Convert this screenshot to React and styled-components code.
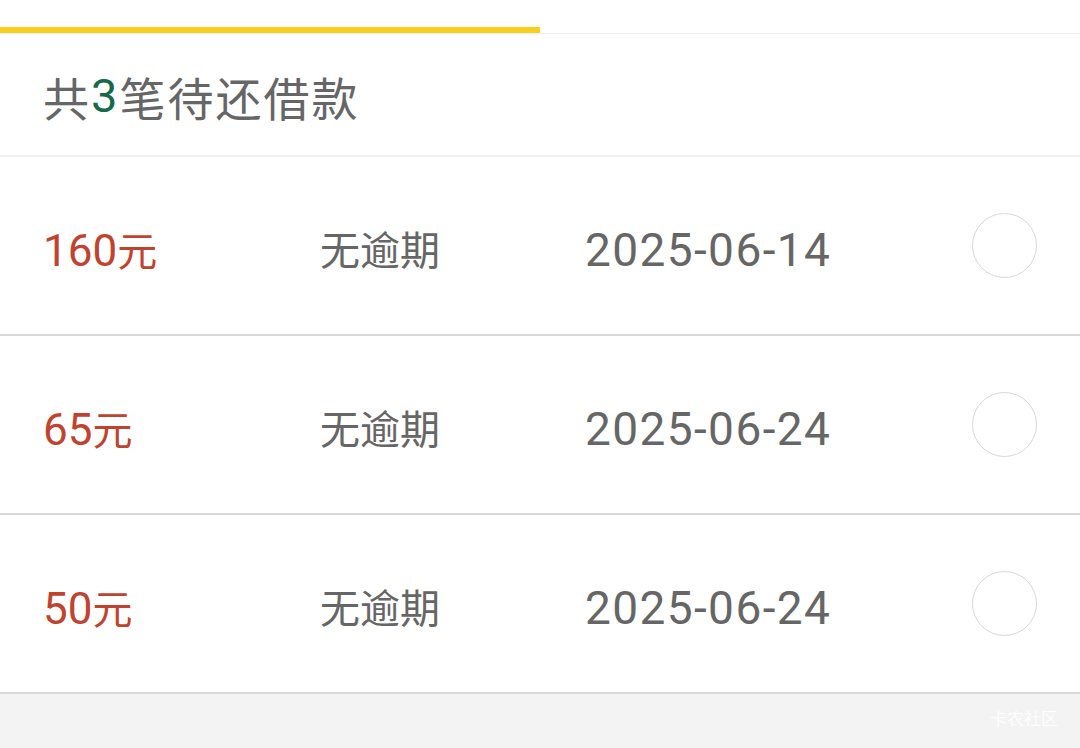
import React from "react";
import styled, { createGlobalStyle } from "styled-components";

const Global = createGlobalStyle`
  html, body { margin: 0; padding: 0; }
  body {
    background: #f3f3f3;
    font-family: Roboto, "Noto Sans CJK SC", "Noto Sans", sans-serif;
  }
`;

const Page = styled.div`
  width: 1080px;
  height: 748px;
  display: flex;
  flex-direction: column;
  background: #f3f3f3;
  overflow: hidden;
`;

const TabBar = styled.div`
  height: 34px;
  flex-shrink: 0;
  background: #ffffff;
  display: flex;
  align-items: flex-end;
`;

const TabTrack = styled.div`
  width: 100%;
  height: 7px;
  display: flex;
  align-items: flex-start;
  border-bottom: 1px solid #eeeeee;
  box-sizing: border-box;
`;

const Indicator = styled.div`
  width: 540px;
  height: 6px;
  background: #f9cf1b;
`;

const Header = styled.div`
  height: 123px;
  flex-shrink: 0;
  background: #ffffff;
  border-bottom: 2px solid #f1f1f1;
  display: flex;
  align-items: center;
  padding-left: 43px;
  padding-top: 2px;
  box-sizing: border-box;
  font-family: "Noto Sans CJK SC", sans-serif;
  font-size: 46px;
  color: #666666;
  letter-spacing: 2px;
`;

const Count = styled.span`
  font-family: Roboto, "Noto Sans CJK SC", sans-serif;
  color: #17694c;
  font-size: 47px;
`;

const List = styled.div`
  background: #ffffff;
  display: flex;
  flex-direction: column;
  flex-shrink: 0;
`;

const Row = styled.div`
  height: 179px;
  box-sizing: border-box;
  border-bottom: 2px solid #d9d9d9;
  display: grid;
  grid-template-columns: 277px 265px 1fr 65px;
  align-items: center;
  padding: 0 43px;
`;

const Amount = styled.div`
  font-size: 44px;
  color: #c0432f;
  font-family: Roboto, "Noto Sans CJK SC", sans-serif;
  padding-top: 6px;
`;

const Yuan = styled.span`
  font-family: "Noto Sans CJK SC", sans-serif;
  font-size: 40px;
`;

const Status = styled.div`
  font-family: "Noto Sans CJK SC", sans-serif;
  font-size: 40px;
  color: #666666;
  padding-top: 4px;
`;

const DateText = styled.div`
  font-family: Roboto, sans-serif;
  font-size: 46px;
  color: #666666;
  letter-spacing: 1.4px;
  padding-top: 8px;
`;

const Radio = styled.div`
  width: 65px;
  height: 65px;
  border-radius: 50%;
  border: 1.5px solid #d8d8d8;
  box-sizing: border-box;
  background: #ffffff;
`;

const Footer = styled.div`
  flex: 1;
  display: flex;
  justify-content: flex-end;
  align-items: flex-start;
  padding: 11px 22px 0 0;
`;

const Watermark = styled.div`
  font-family: "Noto Sans CJK SC", sans-serif;
  font-size: 17px;
  color: #ffffff;
  opacity: 0.9;
`;

const loans = [
  { amount: "160", date: "2025-06-14" },
  { amount: "65", date: "2025-06-24" },
  { amount: "50", date: "2025-06-24" },
];

export default function App() {
  return (
    <Page>
      <Global />
      <TabBar>
        <TabTrack>
          <Indicator />
        </TabTrack>
      </TabBar>
      <Header>
        共<Count>3</Count>笔待还借款
      </Header>
      <List>
        {loans.map((l, i) => (
          <Row key={i}>
            <Amount>
              {l.amount}
              <Yuan>元</Yuan>
            </Amount>
            <Status>无逾期</Status>
            <DateText>{l.date}</DateText>
            <Radio />
          </Row>
        ))}
      </List>
      <Footer>
        <Watermark>卡农社区</Watermark>
      </Footer>
    </Page>
  );
}
